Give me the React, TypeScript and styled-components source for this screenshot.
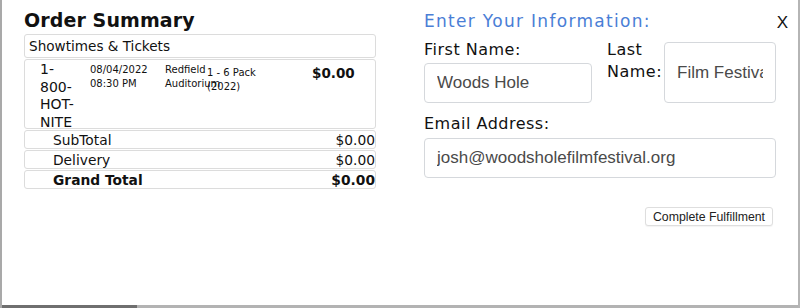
import React from "react";
import styled, { createGlobalStyle } from "styled-components";

const Global = createGlobalStyle`
  html, body { margin: 0; padding: 0; background: #fff; }
  body { width: 800px; height: 308px; overflow: hidden; }
`;

const MAIN = `"DejaVu Sans", "Noto Sans", sans-serif`;
const SYS = `"Liberation Sans", Arial, sans-serif`;

const Modal = styled.div`
  position: relative;
  box-sizing: border-box;
  width: 800px;
  height: 308px;
  border-left: 2px solid #a9a9a9;
  border-right: 2px solid #b5b5b5;
  display: flex;
  flex-direction: column;
  font-family: ${MAIN};
  color: #111;
`;

const Body = styled.div`
  flex: 1;
  display: grid;
  grid-template-columns: 352px 352px;
  column-gap: 48px;
  padding: 8px 0 0 22px;
`;

const Close = styled.button`
  position: absolute;
  top: 13px;
  right: 10px;
  border: none;
  background: none;
  padding: 0;
  font-family: ${SYS};
  font-size: 17px;
  color: #111;
`;

const Title = styled.h1`
  margin: 0 0 2px;
  font-size: 19px;
  font-weight: 700;
  line-height: 24px;
  letter-spacing: 0.1px;
`;

const Box = styled.div`
  box-sizing: border-box;
  border: 1px solid #dcdcdc;
  border-radius: 3px;
  margin-bottom: 1px;
`;

const Header = styled(Box)`
  font-size: 13.6px;
  line-height: 22px;
  padding: 0 4px;
`;

const TicketRow = styled(Box)`
  display: grid;
  grid-template-columns: 50px 75px 42px 105px 60px;
  padding: 1px 0 0 15px;
  height: 70px;
  align-items: start;
`;

const Code = styled.div`
  font-size: 14px;
  line-height: 17.6px;
  width: 36px;
`;

const Small = styled.div<{ $shift?: number }>`
  font-size: 10px;
  line-height: 13.5px;
  white-space: normal;
  margin-top: ${(p) => p.$shift ?? 0}px;
`;

const Nowrap = styled.span`
  white-space: nowrap;
`;

const Price = styled.div`
  font-size: 13.5px;
  font-weight: 700;
  line-height: 17px;
  margin-top: 4px;
`;

const TotalRow = styled(Box)<{ $bold?: boolean }>`
  display: flex;
  justify-content: space-between;
  padding: 0 0 0 28px;
  height: 19px;
  line-height: 18px;
  font-size: 13.8px;
  font-weight: ${(p) => (p.$bold ? 700 : 400)};
`;

const Right = styled.div`
  display: flex;
  flex-direction: column;
  padding-top: 2px;
`;

const Heading = styled.div`
  color: #4a7ed6;
  font-size: 17px;
  letter-spacing: 1.3px;
  line-height: 22px;
  margin-bottom: 7px;
`;

const NameRow = styled.div`
  display: flex;
  align-items: flex-end;
`;

const Field = styled.div<{ $w: number }>`
  display: flex;
  flex-direction: column;
  width: ${(p) => p.$w}px;
`;

const Label = styled.label`
  font-size: 16px;
  letter-spacing: 0.5px;
  line-height: 22px;
  margin-bottom: 2px;
`;

const InlineField = styled.div`
  display: flex;
  align-items: flex-start;
  margin-left: 15px;
  gap: 0;
`;

const InlineLabel = styled.label`
  font-size: 16px;
  letter-spacing: 0.5px;
  line-height: 22px;
  width: 57px;
  margin-top: -3px;
`;

const Input = styled.input<{ $w: number; $h?: number }>`
  box-sizing: border-box;
  width: ${(p) => p.$w}px;
  height: ${(p) => p.$h ?? 40}px;
  border: 1px solid #d5d8dc;
  border-radius: 4px;
  padding: 0 12px;
  font-family: ${SYS};
  font-size: 17px;
  color: #4a4a4a;
  background: #fff;
  outline: none;
`;

const EmailLabel = styled(Label)`
  margin-top: 10px;
  margin-bottom: 3px;
`;

const ButtonRow = styled.div`
  display: flex;
  justify-content: flex-end;
  margin-top: 29px;
  padding-right: 3px;
`;

const Button = styled.button`
  font-family: ${SYS};
  font-size: 12.3px;
  color: #222;
  background: #fff;
  border: 1px solid #dedede;
  border-radius: 3px;
  height: 19px;
  padding: 0 7px;
  box-shadow: 0 1px 1px rgba(0, 0, 0, 0.05);
`;

const Scrollbar = styled.div`
  height: 3px;
  background: #b3b3b3;
  display: flex;
`;

const Thumb = styled.div`
  width: 135px;
  background: #6f6f6f;
`;

export default function App() {
  return (
    <>
      <Global />
      <Modal>
        <Close>X</Close>
        <Body>
          <div>
            <Title>Order Summary</Title>
            <Header>Showtimes &amp; Tickets</Header>
            <TicketRow>
              <Code>1-800-HOT-NITE</Code>
              <Small $shift={2}>
                08/04/2022
                <br />
                08:30 PM
              </Small>
              <Small $shift={2}>
                Redfield <Nowrap>Auditorium</Nowrap>
              </Small>
              <Small $shift={5}>
                1 - 6 Pack
                <br />
                (2022)
              </Small>
              <Price>$0.00</Price>
            </TicketRow>
            <TotalRow>
              <span>SubTotal</span>
              <span>$0.00</span>
            </TotalRow>
            <TotalRow>
              <span>Delivery</span>
              <span>$0.00</span>
            </TotalRow>
            <TotalRow $bold>
              <span>Grand Total</span>
              <span>$0.00</span>
            </TotalRow>
          </div>
          <Right>
            <Heading>Enter Your Information:</Heading>
            <NameRow>
              <Field $w={168}>
                <Label>First Name:</Label>
                <Input $w={168} defaultValue="Woods Hole" />
              </Field>
              <InlineField>
                <InlineLabel>Last Name:</InlineLabel>
                <Input $w={112} $h={61} defaultValue="Film Festival" />
              </InlineField>
            </NameRow>
            <EmailLabel>Email Address:</EmailLabel>
            <Input $w={352} defaultValue="josh@woodsholefilmfestival.org" />
            <ButtonRow>
              <Button>Complete Fulfillment</Button>
            </ButtonRow>
          </Right>
        </Body>
        <Scrollbar>
          <Thumb />
        </Scrollbar>
      </Modal>
    </>
  );
}
